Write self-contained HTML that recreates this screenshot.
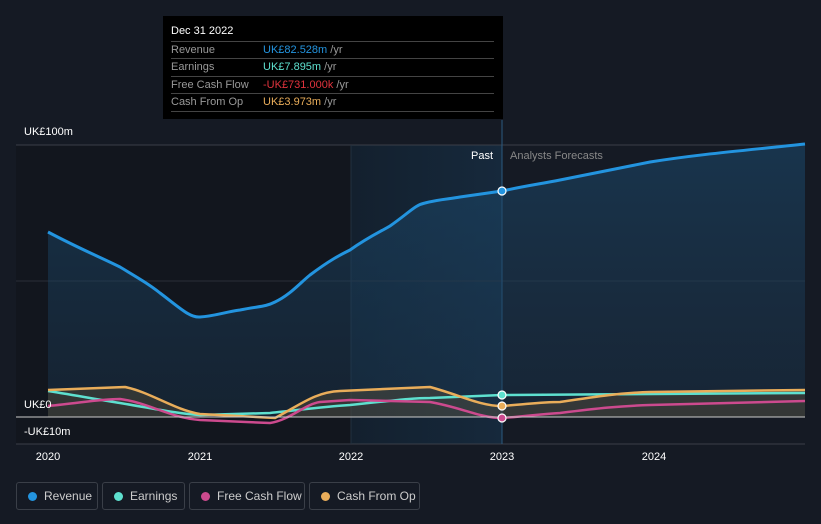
<!DOCTYPE html>
<html><head><meta charset="utf-8"><style>
body{margin:0;width:821px;height:524px;background:#151a24;font-family:"Liberation Sans",sans-serif;overflow:hidden;position:relative}
.t{position:absolute;color:#fff;font-size:11px}
.yr{position:absolute;color:#fff;font-size:11px;top:451px;width:60px;text-align:center;margin-left:-30px}
.leg{position:absolute;top:482px;height:28px;border:1px solid #3a3f48;border-radius:3px;box-sizing:border-box;color:#ccc;font-size:12px;line-height:26px;padding-left:27px}
.leg i{position:absolute;left:11px;top:9px;width:9px;height:9px;border-radius:50%}
.tip{position:absolute;left:163px;top:16px;width:340px;height:103px;background:#000;color:#999;font-size:11px}
.row{position:absolute;left:8px;width:323px;border-top:1px solid #444;height:17px;line-height:17px}
.row b{font-weight:normal;position:absolute;left:92px}
</style></head><body>
<svg width="821" height="524" style="position:absolute;left:0;top:0">
<defs>
<linearGradient id="hg" x1="0" x2="1" y1="0" y2="0"><stop offset="0" stop-color="#13202e"/><stop offset="1" stop-color="#16293c"/></linearGradient>
<linearGradient id="rf" x1="0" x2="0" y1="0" y2="1"><stop offset="0" stop-color="#1b4a6e" stop-opacity=".55"/><stop offset="1" stop-color="#1b3a55" stop-opacity=".35"/></linearGradient>
</defs>
<rect x="16" y="145" width="335" height="299" fill="#12161e"/>
<rect x="351" y="145" width="151" height="299" fill="url(#hg)"/>
<line x1="16" y1="145" x2="805" y2="145" stroke="#3a3f48"/>
<line x1="16" y1="281" x2="805" y2="281" stroke="#2a2f38"/>
<line x1="16" y1="444" x2="805" y2="444" stroke="#3a3f48"/>
<line x1="351" y1="145" x2="351" y2="444" stroke="#22303f"/>
<line x1="502" y1="120" x2="502" y2="444" stroke="#2b5a80"/>
<path d="M48,232 C80,249 100,257 120,267 C140,279 150,285 160,293 C180,308 190,318 200,317 C215,316 225,312 240,310 C260,306 265,307 275,302 C290,295 300,283 310,275 C330,260 340,255 350,250 C370,236 380,232 390,226 C410,212 415,205 425,203 C440,199 450,199 460,197 L502,191 C530,185 540,184 560,180 L650,162 C700,154 750,150 805,144 L805,417 L48,417Z" fill="url(#rf)"/>
<path d="M48,232 C80,249 100,257 120,267 C140,279 150,285 160,293 C180,308 190,318 200,317 C215,316 225,312 240,310 C260,306 265,307 275,302 C290,295 300,283 310,275 C330,260 340,255 350,250 C370,236 380,232 390,226 C410,212 415,205 425,203 C440,199 450,199 460,197 L502,191 C530,185 540,184 560,180 L650,162 C700,154 750,150 805,144" fill="none" stroke="#2394df" stroke-width="3"/>
<path d="M48,390 L125,387 C150,392 175,410 200,414 L275,418 C300,405 315,392 340,391 L430,387 C460,395 480,406 502,406 C530,404 540,402 560,402 C600,396 620,393 650,392 L805,390 L805,417 L48,417Z" fill="#6b5a3a" fill-opacity=".35"/>
<path d="M48,391 C80,396 100,400 120,403 C150,408 180,414 200,415 L270,413 C300,410 320,407 350,405 C390,401 410,398 430,398 L502,395 L805,393" fill="none" stroke="#5ee0cf" stroke-width="2.5"/>
<path d="M48,406 C80,403 100,399 120,399 C150,403 170,418 200,420 L270,423 C290,420 305,404 320,402 L350,400 L430,402 C460,407 480,418 502,418 C530,416 540,414 560,413 C600,408 620,406 650,405 L805,401" fill="none" stroke="#cc4a8e" stroke-width="2.5"/>
<path d="M48,390 L125,387 C150,392 175,410 200,414 L275,418 C300,405 315,392 340,391 L430,387 C460,395 480,406 502,406 C530,404 540,402 560,402 C600,396 620,393 650,392 L805,390" fill="none" stroke="#e9ad5a" stroke-width="2.5"/>
<line x1="16" y1="417" x2="805" y2="417" stroke="#ccc" stroke-width="1"/>
<circle cx="502" cy="191" r="4" fill="#2394df" stroke="#fff" stroke-width="1.2"/>
<circle cx="502" cy="395" r="4" fill="#5ee0cf" stroke="#fff" stroke-width="1.2"/>
<circle cx="502" cy="406" r="4" fill="#e9ad5a" stroke="#fff" stroke-width="1.2"/>
<circle cx="502" cy="418" r="4" fill="#cc4a8e" stroke="#fff" stroke-width="1.2"/>
</svg>
<div class="t" style="left:24px;top:126px">UK£100m</div>
<div class="t" style="left:24px;top:399px">UK£0</div>
<div class="t" style="left:24px;top:426px">-UK£10m</div>
<div class="t" style="left:471px;top:150px">Past</div>
<div class="t" style="left:510px;top:150px;color:#888">Analysts Forecasts</div>
<div class="yr" style="left:48px">2020</div>
<div class="yr" style="left:200px">2021</div>
<div class="yr" style="left:351px">2022</div>
<div class="yr" style="left:502px">2023</div>
<div class="yr" style="left:654px">2024</div>
<div class="tip">
<div style="position:absolute;left:8px;top:9px;color:#fff">Dec 31 2022</div>
<div class="row" style="top:25px">Revenue<b><span style="color:#2394df">UK£82.528m</span> /yr</b></div>
<div class="row" style="top:42px">Earnings<b><span style="color:#5ee0cf">UK£7.895m</span> /yr</b></div>
<div class="row" style="top:60px">Free Cash Flow<b><span style="color:#e0333d">-UK£731.000k</span> /yr</b></div>
<div class="row" style="top:77px">Cash From Op<b><span style="color:#e9ad5a">UK£3.973m</span> /yr</b></div>
<div class="row" style="top:95px;height:0"></div>
</div>
<div class="leg" style="left:16px;width:82px"><i style="background:#2394df"></i>Revenue</div>
<div class="leg" style="left:102px;width:83px"><i style="background:#5ee0cf"></i>Earnings</div>
<div class="leg" style="left:189px;width:116px"><i style="background:#cc4a8e"></i>Free Cash Flow</div>
<div class="leg" style="left:309px;width:111px"><i style="background:#e9ad5a"></i>Cash From Op</div>
</body></html>
